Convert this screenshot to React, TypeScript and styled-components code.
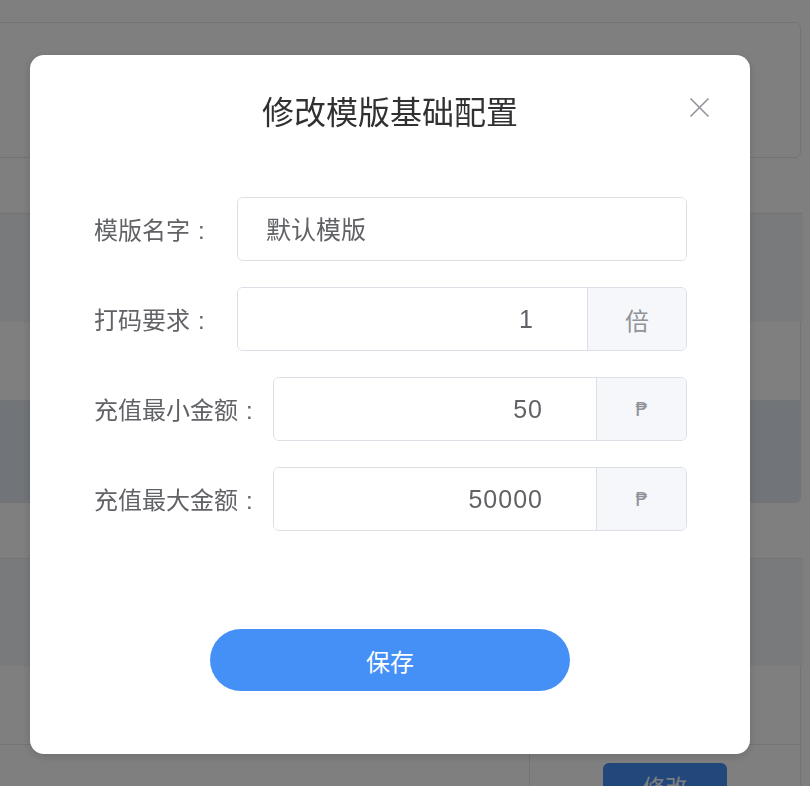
import React from "react";
import styled, { createGlobalStyle } from "styled-components";

const GlobalStyle = createGlobalStyle`
  html, body {
    margin: 0;
    padding: 0;
    background: #ffffff;
    font-family: "Liberation Sans", "Noto Sans CJK SC", sans-serif;
    overflow: hidden;
  }
  * { box-sizing: border-box; }
`;

/* ---------- background page ---------- */
const Page = styled.div`
  width: 810px;
  height: 786px;
  overflow: hidden;
  display: flex;
  flex-direction: column;
  padding-top: 22px;
`;

const Card = styled.div<{ $h: number; $gapAfter?: number }>`
  margin-left: -10px;
  width: 811px;
  height: ${(p) => p.$h}px;
  margin-bottom: ${(p) => p.$gapAfter ?? 0}px;
  border: 1px solid #e4e7ed;
  border-radius: 6px;
  background: #ffffff;
  flex-shrink: 0;
`;

const Band = styled.div<{ $h: number }>`
  margin-left: -10px;
  width: 813px;
  height: ${(p) => p.$h}px;
  background: #f3f4f6;
  border-top: 1px solid #e8e9ec;
  flex-shrink: 0;
`;

const Table = styled.div<{ $gapAfter?: number }>`
  margin-left: -10px;
  width: 811px;
  border: 1px solid #e4e7ed;
  border-top: none;
  border-radius: 0 0 6px 6px;
  margin-bottom: ${(p) => p.$gapAfter ?? 0}px;
  display: flex;
  flex-direction: column;
  flex-shrink: 0;
  overflow: hidden;
`;

const TableRow = styled.div<{ $h: number; $bg?: string }>`
  height: ${(p) => p.$h}px;
  background: ${(p) => p.$bg ?? "#ffffff"};
  border-bottom: 1px solid #e8eaee;
  display: grid;
  grid-template-columns: 539px 1fr;
  flex-shrink: 0;
`;

const Cell = styled.div<{ $divider?: boolean }>`
  border-right: ${(p) => (p.$divider ? "1px solid #e4e7ed" : "none")};
  display: flex;
  align-items: flex-start;
  padding-top: 18px;
  padding-left: 73px;
`;

const PageButton = styled.div`
  width: 124px;
  height: 44px;
  border-radius: 6px;
  background: #448ef4;
  color: #ffffff;
  font-size: 22px;
  display: flex;
  align-items: center;
  justify-content: center;
`;

/* ---------- overlay + dialog ---------- */
const Overlay = styled.div`
  position: fixed;
  inset: 0;
  background: rgba(0, 0, 0, 0.5);
  display: flex;
  align-items: flex-start;
  padding-top: 55px;
  padding-left: 30px;
`;

const Dialog = styled.div`
  width: 720px;
  height: 699px;
  background: #ffffff;
  border-radius: 14px;
  box-shadow: 0 2px 10px rgba(0, 0, 0, 0.15);
  display: flex;
  flex-direction: column;
`;

const Header = styled.div`
  height: 142px;
  display: grid;
  grid-template-columns: 1fr auto 1fr;
  align-items: start;
  padding-top: 38px;
`;

const Title = styled.h2`
  grid-column: 2;
  margin: 0;
  font-size: 32px;
  line-height: 40px;
  font-weight: 400;
  color: #303133;
`;

const CloseButton = styled.button`
  grid-column: 3;
  justify-self: end;
  margin-top: 4px;
  margin-right: 40px;
  width: 21px;
  height: 21px;
  padding: 0;
  border: none;
  background: transparent;
  display: flex;
  cursor: pointer;
`;

const Form = styled.div`
  display: flex;
  flex-direction: column;
  gap: 26px;
  padding: 0 63px 0 64px;
`;

const Row = styled.div`
  display: flex;
  align-items: center;
  height: 64px;
`;

const Label = styled.label<{ $w: number }>`
  width: ${(p) => p.$w}px;
  flex-shrink: 0;
  font-size: 24px;
  color: #606266;
  white-space: nowrap;
  margin-top: -2px;
`;

const Colon = styled.span`
  margin-left: 8px;
`;

const InputGroup = styled.div`
  flex: 1;
  height: 64px;
  display: flex;
  border: 1px solid #dcdfe6;
  border-radius: 6px;
  overflow: hidden;
`;

const Input = styled.input<{ $align: "left" | "right" }>`
  flex: 1;
  min-width: 0;
  border: none;
  outline: none;
  background: #ffffff;
  font-family: inherit;
  font-size: 25px;
  color: #606266;
  text-align: ${(p) => p.$align};
  letter-spacing: ${(p) => (p.$align === "right" ? "1px" : "0")};
  padding: ${(p) => (p.$align === "left" ? "0 0 2px 28px" : "0 53px 0 0")};
`;

const Append = styled.div<{ $w: number; $size: number }>`
  width: ${(p) => p.$w}px;
  flex-shrink: 0;
  background: #f5f7fa;
  border-left: 1px solid #dcdfe6;
  color: #909399;
  font-size: ${(p) => p.$size}px;
  font-family: "DejaVu Sans", "Noto Sans CJK SC", sans-serif;
  display: flex;
  align-items: center;
  justify-content: center;
`;

const Footer = styled.div`
  display: flex;
  justify-content: center;
  padding-top: 98px;
`;

const SaveButton = styled.button`
  width: 360px;
  height: 62px;
  border: none;
  border-radius: 31px;
  background: #4590f6;
  color: #ffffff;
  font-family: inherit;
  font-size: 24px;
  cursor: pointer;
`;

const CloseIcon = () => (
  <svg width="21" height="21" viewBox="0 0 21 21">
    <path d="M1.5 1.5 L19.5 19.5 M19.5 1.5 L1.5 19.5" stroke="#909399" strokeWidth="1.6" fill="none" />
  </svg>
);

type Field = {
  label: string;
  labelW: number;
  value: string;
  align: "left" | "right";
  append?: string;
  appendW?: number;
  appendSize?: number;
};

const fields: Field[] = [
  { label: "模版名字", labelW: 143, value: "默认模版", align: "left" },
  { label: "打码要求", labelW: 143, value: "1", align: "right", append: "倍", appendW: 99, appendSize: 24 },
  { label: "充值最小金额", labelW: 179, value: "50", align: "right", append: "₱", appendW: 90, appendSize: 20 },
  { label: "充值最大金额", labelW: 179, value: "50000", align: "right", append: "₱", appendW: 90, appendSize: 20 },
];

export default function App() {
  return (
    <>
      <GlobalStyle />
      <Page>
        <Card $h={136} $gapAfter={55} />
        <Band $h={109} />
        <Table $gapAfter={55}>
          <TableRow $h={79} />
          <TableRow $h={101} $bg="#e2eaf2" />
        </Table>
        <Band $h={108} />
        <Table>
          <TableRow $h={79} />
          <TableRow $h={120}>
            <Cell $divider />
            <Cell>
              <PageButton>修改</PageButton>
            </Cell>
          </TableRow>
        </Table>
      </Page>
      <Overlay>
        <Dialog>
          <Header>
            <Title>修改模版基础配置</Title>
            <CloseButton aria-label="close">
              <CloseIcon />
            </CloseButton>
          </Header>
          <Form>
            {fields.map((f) => (
              <Row key={f.label}>
                <Label $w={f.labelW}>
                  {f.label}
                  <Colon>:</Colon>
                </Label>
                <InputGroup>
                  <Input $align={f.align} defaultValue={f.value} readOnly />
                  {f.append && (
                    <Append $w={f.appendW ?? 90} $size={f.appendSize ?? 20}>
                      {f.append}
                    </Append>
                  )}
                </InputGroup>
              </Row>
            ))}
          </Form>
          <Footer>
            <SaveButton>保存</SaveButton>
          </Footer>
        </Dialog>
      </Overlay>
    </>
  );
}
